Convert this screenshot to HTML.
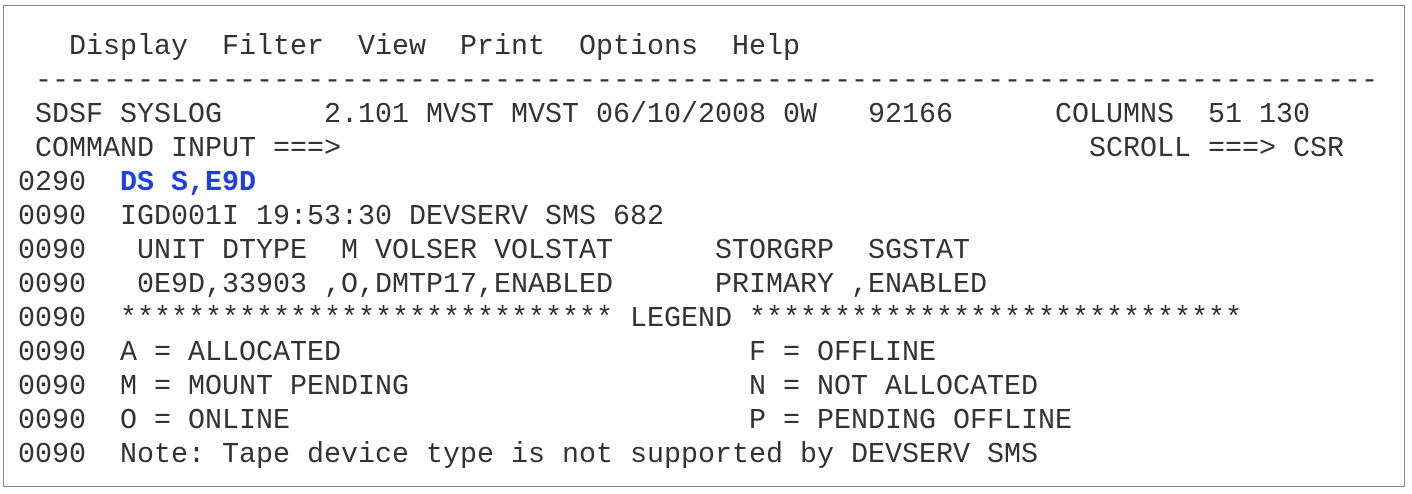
<!DOCTYPE html>
<html><head><style>
body{margin:0;width:1412px;height:494px;background:#fff;overflow:hidden}
.box{position:absolute;left:3px;top:5px;width:1402px;height:482px;border:1.5px solid #888;box-sizing:border-box}
pre{position:absolute;left:18px;top:30px;margin:0;font-family:"Liberation Mono",monospace;font-size:28.33px;line-height:34px;color:#333;letter-spacing:0}
b{color:#1f3fe6}
</style></head><body>
<div class="box"></div>
<pre>   Display  Filter  View  Print  Options  Help
 -------------------------------------------------------------------------------
 SDSF SYSLOG      2.101 MVST MVST 06/10/2008 0W   92166      COLUMNS  51 130
 COMMAND INPUT ===>                                            SCROLL ===> CSR
0290  <b>DS S,E9D</b>
0090  IGD001I 19:53:30 DEVSERV SMS 682
0090   UNIT DTYPE  M VOLSER VOLSTAT      STORGRP  SGSTAT
0090   0E9D,33903 ,O,DMTP17,ENABLED      PRIMARY ,ENABLED
0090  ***************************** LEGEND *****************************
0090  A = ALLOCATED                        F = OFFLINE
0090  M = MOUNT PENDING                    N = NOT ALLOCATED
0090  O = ONLINE                           P = PENDING OFFLINE
0090  Note: Tape device type is not supported by DEVSERV SMS</pre>
</body></html>
